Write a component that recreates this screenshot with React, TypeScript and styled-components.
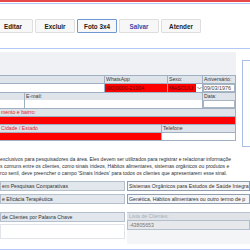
import React, { FC } from 'react'
import styled, { createGlobalStyle } from 'styled-components'

const GlobalStyle = createGlobalStyle`
  html, body {
    margin: 0;
    width: 250px;
    height: 250px;
    overflow: hidden;
    background: #fff;
    font-family: "Liberation Sans", Arial, sans-serif;
  }
`

const Page = styled.div`
  width: 250px;
  display: flex;
  flex-direction: column;
`

const RedRule = styled.div<{ $top?: number }>`
  height: 2px;
  margin-top: ${({ $top }) => $top ?? 0}px;
  background-color: #e8474a;
`

const BlueRule = styled.div<{ $top?: number }>`
  height: 1px;
  margin-top: ${({ $top }) => $top ?? 0}px;
  background-color: #b3c7f4;
`

const Toolbar = styled.div`
  display: flex;
  gap: 2px;
  margin-left: -7px;
  padding: 15px 0 15px 0;
`

const Button = styled.div<{ $focused?: boolean, $primary?: boolean }>`
  display: flex;
  align-items: center;
  justify-content: center;
  flex: none;
  width: 40px;
  height: 14px;
  box-sizing: border-box;
  background-color: #f7f7f7;
  border: 1px solid ${({ $focused }) => $focused ? '#6f98d2' : '#dedede'};
  border-radius: 1px;
  font-size: 6.3px;
  font-weight: bold;
  color: ${({ $primary }) => $primary ? '#4346a4' : '#222'};
`

const FormArea = styled.div`
  display: flex;
  align-items: flex-start;
  margin-top: 3px;
`

const FormMain = styled.div`
  width: 236px;
  flex: none;
  display: flex;
  flex-direction: column;
`

const HeaderBand = styled.div`
  height: 23px;
  background-color: #eff1f4;
`

const FormTable = styled.div`
  display: flex;
  flex-direction: column;
  gap: 1px;
  padding: 1px 1px 1px 0;
  background-color: #9fb0c3;
`

const TopGrid = styled.div`
  display: grid;
  grid-template-columns: 24px 79px 62px 34px 32px;
  grid-template-rows: 7px 8px 6px 8px;
  gap: 1px;
`

const CityGrid = styled.div`
  display: grid;
  grid-template-columns: 161px 73px;
  grid-template-rows: 7px 7px;
  gap: 1px;
`

const Label = styled.div<{ $span?: string, $red?: boolean }>`
  grid-column: ${({ $span }) => $span ?? 'auto'};
  height: 7px;
  box-sizing: border-box;
  padding-left: 1px;
  background-color: #dfe4ea;
  font-size: 5.2px;
  line-height: 7px;
  white-space: nowrap;
  overflow: hidden;
  color: ${({ $red }) => $red ? '#e2262c' : '#3a3a3a'};
  align-self: stretch;
`

const Field = styled.div<{ $span?: string, $red?: boolean }>`
  grid-column: ${({ $span }) => $span ?? 'auto'};
  min-height: 7px;
  box-sizing: border-box;
  padding-left: 1px;
  background-color: ${({ $red }) => $red ? '#ff0000' : '#fff'};
  font-size: 5.4px;
  line-height: 8px;
  white-space: nowrap;
  overflow: hidden;
  color: ${({ $red }) => $red ? '#5c0000' : '#333'};
  align-self: stretch;
`

const DateInput = styled.div`
  align-self: stretch;
  box-sizing: border-box;
  background-color: #fff;
  border: 1px solid #a9b5c2;
  font-size: 5.4px;
  line-height: 6px;
  color: #444;
  white-space: nowrap;
  overflow: hidden;
`

const Select = styled.div`
  display: flex;
  align-self: stretch;
  background-color: #fff;
`

const SelectValue = styled.div`
  flex: 1;
  padding-left: 1px;
  background-color: #ff0000;
  color: #5c0000;
  font-size: 5.4px;
  line-height: 8px;
  overflow: hidden;
  white-space: nowrap;
  text-overflow: clip;
`

const SelectArrow = styled.div`
  width: 6px;
  display: flex;
  align-items: center;
  justify-content: center;
`

const PhotoPanel = styled.div`
  flex: none;
  width: 40px;
  height: 85px;
  margin: 8px 0 0 6px;
  border: 1px solid #a9bde6;
  background-color: #fff;
`

const Paragraph = styled.div`
  margin-top: 9px;
  font-size: 5px;
  line-height: 7px;
  color: #2e2e2e;
  white-space: nowrap;
`

const Lower = styled.div`
  display: flex;
  gap: 2px;
  margin-top: 4px;
`

const LowerCol = styled.div`
  display: flex;
  flex-direction: column;
`

const LeftCol = styled(LowerCol)`
  width: 125px;
  flex: none;
`

const RightCol = styled(LowerCol)`
  flex: 1;
  min-width: 0;
`

const Cell = styled.div<{ $top?: number, $tone?: 'label' | 'field' | 'muted' }>`
  height: 10px;
  margin-top: ${({ $top }) => $top ?? 0}px;
  box-sizing: border-box;
  padding-left: 1px;
  border: 1px solid ${({ $tone }) => $tone === 'field' ? '#8f9daf' : '#b3bfcc'};
  background-color: ${({ $tone }) => $tone === 'field' ? '#f3f5f8' : $tone === 'muted' ? '#e6e8eb' : '#e2e7ed'};
  font-size: 5.2px;
  line-height: 8px;
  color: ${({ $tone }) => $tone === 'muted' ? '#777' : '#333'};
  white-space: nowrap;
  overflow: hidden;
`

const ListLabel = styled.div`
  height: 7px;
  margin-top: 8px;
  padding-left: 2px;
  border-top: 1px solid #b8c3cf;
  background-color: #dfe3e8;
  font-size: 5.2px;
  line-height: 7px;
  color: #a8b0ba;
`

const ListArea = styled.div`
  height: 14px;
  background-color: #f4f5f6;
`

const KeywordBox = styled.div`
  height: 15px;
  margin-top: 2px;
  box-sizing: border-box;
  border: 1px solid #e1e4e8;
  background-color: #fff;
`

const Chevron: FC = () => (
  <svg width="5" height="4" viewBox="0 0 5 4">
    <path d="M0.5 1 L2.5 3 L4.5 1" fill="none" stroke="#666" strokeWidth="0.7" />
  </svg>
)

const App: FC = () => {
  return (
    <Page>
      <GlobalStyle />
      <RedRule />
      <BlueRule $top={1} />
      <Toolbar>
        <Button>Editar</Button>
        <Button>Excluir</Button>
        <Button $focused>Foto 3x4</Button>
        <Button $primary>Salvar</Button>
        <Button>Atender</Button>
      </Toolbar>
      <BlueRule />
      <FormArea>
        <FormMain>
          <HeaderBand />
          <FormTable>
            <TopGrid>
              <Label $span="1 / 3" />
              <Label>WhatsApp</Label>
              <Label>Sexo:</Label>
              <Label>Aniversário:</Label>
              <Field $span="1 / 3" />
              <Field $red>(00)0000-21304</Field>
              <Select>
                <SelectValue>MASCULI</SelectValue>
                <SelectArrow><Chevron /></SelectArrow>
              </Select>
              <DateInput>09/03/1976</DateInput>
              <Label />
              <Label $span="2 / 5">E-mail:</Label>
              <Label>Data:</Label>
              <Field />
              <Field $span="2 / 5" />
              <DateInput />
            </TopGrid>
            <Label $red>mento e  bairro:</Label>
            <Field $red />
            <CityGrid>
              <Label $red>Cidade / Estado</Label>
              <Label>Telefone</Label>
              <Field $red />
              <Field />
            </CityGrid>
          </FormTable>
        </FormMain>
        <PhotoPanel />
      </FormArea>
      <Paragraph>
        <div>exclusivos para pesquisadores da área. Eles devem ser utilizados para registrar e relacionar informaçõe</div>
        <div>s comuns entre os clientes, como sinais írideos, Hábitos alimentares, sistemas orgânicos ou produtos e</div>
        <div>rco senil, deve preencher o campo 'Sinais Irideos' para todos os clientes que apresentarem esse sinal.</div>
      </Paragraph>
      <Lower>
        <LeftCol>
          <Cell $tone="label">em Pesquisas Comparativas</Cell>
          <Cell $tone="label" $top={3}>e Eficácia Terapêutica</Cell>
          <Cell $tone="label" $top={8}>de Clientes por Palavra Chave</Cell>
          <KeywordBox />
        </LeftCol>
        <RightCol>
          <Cell $tone="field">Sistemas Orgânicos para Estudos de Saúde Integra</Cell>
          <Cell $tone="field" $top={3}>Genética, Hábitos alimentares ou outro termo de p</Cell>
          <ListLabel>Lista de Clientes:</ListLabel>
          <Cell $tone="muted">-43805653</Cell>
          <ListArea />
        </RightCol>
      </Lower>
      <BlueRule $top={5} />
      <RedRule $top={2} />
    </Page>
  )
}

export default App
